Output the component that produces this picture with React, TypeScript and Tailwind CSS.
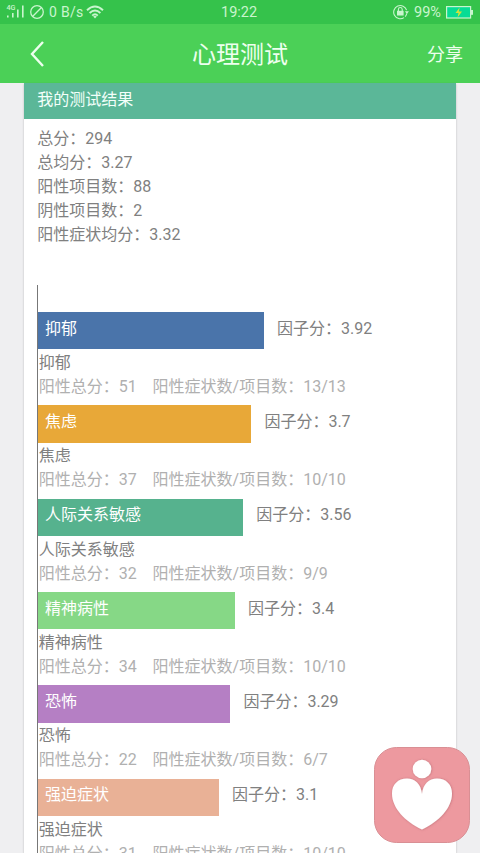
const summary = ['总分：294', '总均分：3.27', '阳性项目数：88', '阴性项目数：2', '阳性症状均分：3.32'];

const factors = [
  { name: '抑郁', score: '3.92', total: 51, ratio: '13/13', bar: 'w-[226px] bg-[#4a74aa]' },
  { name: '焦虑', score: '3.7', total: 37, ratio: '10/10', bar: 'w-[213.4px] bg-[#e8a838]' },
  { name: '人际关系敏感', score: '3.56', total: 32, ratio: '9/9', bar: 'w-[205.3px] bg-[#56b28e]' },
  { name: '精神病性', score: '3.4', total: 34, ratio: '10/10', bar: 'w-[197px] bg-[#86d886]' },
  { name: '恐怖', score: '3.29', total: 22, ratio: '6/7', bar: 'w-[192.4px] bg-[#b57fc4]' },
  { name: '强迫症状', score: '3.1', total: 31, ratio: '10/10', bar: 'w-[181px] bg-[#e9b196]' },
];

function StatusBar() {
  return (
    <div className="relative flex h-6 shrink-0 items-center bg-[#35c24b] text-[#c9f5ce]">
      <svg className="ml-[6px] h-5 w-[20px]" viewBox="0 0 20 20" fill="currentColor">
        <text x="0.5" y="8.4" fontSize="7.6" fontWeight="500" textLength="9" lengthAdjust="spacingAndGlyphs">4G</text>
        <rect x="1" y="13.5" width="1.6" height="2" />
        <rect x="6" y="11" width="1.6" height="4.5" />
        <rect x="11" y="7.5" width="1.6" height="8" />
        <rect x="16" y="3.5" width="1.6" height="12" />
      </svg>
      <svg className="ml-[3px] h-4 w-4" viewBox="0 0 16 16" fill="none" stroke="currentColor" strokeWidth="1.3">
        <circle cx="8" cy="8" r="6.3" />
        <path d="M3.8 12.2 12.2 3.8" />
      </svg>
      <span className="ml-[4px] w-[35px] whitespace-nowrap text-[14px] leading-6 tracking-[0.3px]">0 B/s</span>
      <svg className="ml-[2px] h-[14px] w-[18px]" viewBox="0 0 18 14" fill="none" stroke="currentColor" strokeWidth="1.9">
        <path d="M1 5.2Q9-2.2 17 5.2M3.6 8Q9 3 14.4 8M6.2 10.6Q9 8 11.8 10.6" />
        <path d="M7.2 11.5Q9 10 10.8 11.5L9 13.5Z" fill="currentColor" stroke="none" />
      </svg>
      <span className="absolute left-[221px] top-px text-[14.5px] leading-6">19:22</span>
      <div className="ml-auto flex items-center">
        <svg className="h-4 w-4" viewBox="0 0 16 16" fill="none" stroke="currentColor" strokeWidth="1.1">
          <path d="M11 13.6A6.6 6.6 0 1 1 13.6 6.2" />
          <path d="M11.9 7.3h4L13.9 10Z" fill="currentColor" stroke="none" />
          <path d="M13.8 9.5Q13.4 11.3 12.2 12.7" />
          <rect x="4" y="6.8" width="6.6" height="4.7" fill="currentColor" stroke="none" />
          <path d="M5.4 7.2V5.4a1.9 1.9 0 0 1 3.8 0v1.8" />
        </svg>
        <span className="ml-[5px] w-[28px] whitespace-nowrap pt-px text-[14.5px] leading-6">99%</span>
        <svg className="ml-[4px] mr-[6px] h-[13px] w-[28px]" viewBox="0 0 28 13">
          <rect x="0.6" y="0.6" width="24" height="11.4" fill="#08dc95" stroke="#c9f5ce" strokeWidth="1.2" />
          <rect x="25" y="4" width="2" height="4.8" fill="#c9f5ce" />
          <path d="M13.6 1.5 9.5 7h3l-1 4.6L16 5.6h-3.2Z" fill="#d3e03b" />
        </svg>
      </div>
    </div>
  );
}

function TitleBar() {
  return (
    <header className="flex h-[59px] shrink-0 items-center justify-between bg-[#4bd057] text-[#edffee]">
      <div className="w-20 pl-[29px]">
        <svg className="h-7 w-4" viewBox="0 0 16 28" fill="none" stroke="currentColor" strokeWidth="2.4">
          <path d="M14 2 3 14 14 26" />
        </svg>
      </div>
      <h1 className="pt-[2px] text-[24px] leading-[60px]">心理测试</h1>
      <div className="w-20 pr-[17px] pt-[2px] text-right text-[18px]">分享</div>
    </header>
  );
}

export default function App() {
  return (
    <div className="relative flex h-[853px] w-[480px] flex-col overflow-hidden bg-[#efeff1] font-['Roboto','Noto_Sans_CJK_SC',sans-serif] text-[16px]">
      <StatusBar />
      <TitleBar />
      <main className="mx-6 min-h-0 flex-1 bg-white text-[#808080] shadow-[0_1px_2px_rgba(0,0,0,0.22)]">
        <h2 className="h-9 bg-[#5bb798] pl-[13.3px] pt-[4.5px] leading-6 text-[#f3fffa]">我的测试结果</h2>
        <div className="pl-[13.3px] pt-[8px] leading-6">
          {summary.map((line) => (
            <p key={line}>{line}</p>
          ))}
        </div>
        <section className="ml-[13px] mt-[38px] border-l border-[#777] pt-[27px]">
          {factors.map((f) => (
            <div key={f.name} className="h-[93.35px]">
              <div className="flex h-[37.3px]">
                <div className={`${f.bar} pl-[7px] pt-[4.5px] leading-6 text-white`}>{f.name}</div>
                <span className="pl-[13px] pt-[4.5px] leading-6">因子分：{f.score}</span>
              </div>
              <p className="pl-[0.7px] pt-[1.6px] leading-6">{f.name}</p>
              <p className="whitespace-pre pl-[0.7px] leading-6 text-[#b0b0b0]">{`阳性总分：${f.total}    阳性症状数/项目数：${f.ratio}`}</p>
            </div>
          ))}
        </section>
      </main>
      <svg className="absolute left-[374px] top-[747px] h-24 w-24" viewBox="0 0 96 96">
        <defs>
          <filter id="soft" x="-20%" y="-20%" width="140%" height="140%">
            <feDropShadow dx="0.4" dy="0.2" stdDeviation="0.9" floodColor="#994d55" floodOpacity="0.55" />
          </filter>
        </defs>
        <rect x="0.5" y="0.5" width="95" height="95" rx="22" fill="#ed999f" stroke="#d98f94" />
        <g fill="#fff" filter="url(#soft)">
          <circle cx="48" cy="22" r="9.3" />
          <path d="M48 47C47 37 41 31.5 33 31.5C24 31.5 18 37.5 18 46.5C18 61 31 74.5 48 82.5C65 74.5 78 61 78 46.5C78 37.5 72 31.5 63 31.5C55 31.5 49 37 48 47Z" />
        </g>
      </svg>
    </div>
  );
}
